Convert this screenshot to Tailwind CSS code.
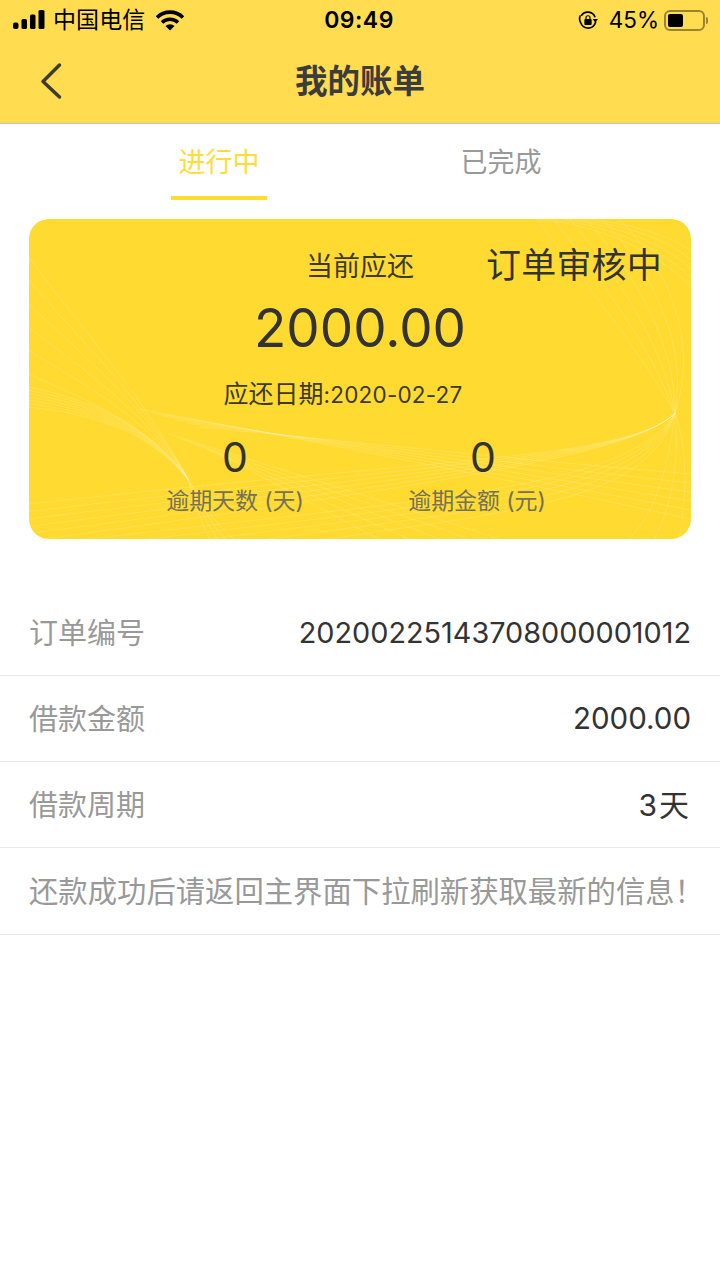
<!DOCTYPE html>
<html lang="zh-CN">
<head>
    <meta charset="UTF-8">
    <meta name="viewport" content="width=device-width, initial-scale=1.0">
    <title>我的账单</title>
    <script src="https://cdn.jsdelivr.net/npm/@tailwindcss/browser@4"></script>
</head>
<body class="bg-white text-[#333333] font-['Inter','Noto_Sans_CJK_SC',sans-serif]">
<div class="w-[720px] h-[1280px] overflow-hidden bg-white">

    <!-- 顶部黄色区域 -->
    <header class="h-[124px] bg-[#ffdc50] border-b border-[#c9c5ab]">
        <div class="h-[40px] flex items-center justify-between pl-[13px] pr-[12px] text-black">
            <div class="flex items-center w-[200px]">
                <svg width="32" height="20" viewBox="0 0 32 20" class="block">
                    <rect x="0" y="12.500" width="5.500" height="6.500" rx="2" fill="#000"/>
                    <rect x="8.500" y="9" width="5.500" height="10" rx="1.500" fill="#000"/>
                    <rect x="17" y="4.500" width="5.500" height="14.500" rx="1.500" fill="#000"/>
                    <rect x="25.500" y="0" width="6" height="19" rx="1.500" fill="#000"/>
                </svg>
                <span class="ml-[8px] text-[23px] leading-[30px] tracking-[0.1px] whitespace-nowrap">中国电信</span>
                <svg width="30" height="22" viewBox="0 0 30 22" class="ml-[10px] block">
                    <path d="M2 8.500a18.500 18.500 0 0 1 26 0" fill="none" stroke="#000" stroke-width="3.600"/>
                    <path d="M7 13.500a11.500 11.500 0 0 1 16 0" fill="none" stroke="#000" stroke-width="3.600"/>
                    <path d="M10.500 17a6.500 6.500 0 0 1 9 0L15 21.500z" fill="#000"/>
                </svg>
            </div>
            <div class="text-[23px] font-semibold tracking-[0.5px] leading-[30px] ml-[-3px]">09:49</div>
            <div class="flex items-center w-[200px] justify-end">
                <svg width="20" height="20" viewBox="0 0 22 22" class="block">
                    <path d="M18.800 8A8.500 8.500 0 0 0 3.500 6.500M2.500 6A8.800 8.800 0 0 0 3 14M3 14a8.500 8.500 0 0 0 15.500 1.500A8.500 8.500 0 0 0 19.500 12" fill="none" stroke="#000" stroke-width="1.800"/>
                    <path d="M16 10h6l-3 3.500z" fill="#000"/>
                    <rect x="7" y="10" width="8" height="6.500" rx="1" fill="#000"/>
                    <path d="M8.800 10V8.500a2.200 2.200 0 0 1 4.400 0V10" fill="none" stroke="#000" stroke-width="1.300"/>
                </svg>
                <span class="ml-[11px] text-[22.500px] leading-[30px]">45%</span>
                <div class="ml-[5px] flex items-center">
                    <div class="w-[41px] h-[21px] rounded-[6px] border-2 border-[#9a8434] p-[2px]">
                        <div class="w-[15px] h-full bg-black rounded-[2px]"></div>
                    </div>
                    <div class="ml-[1px] w-[2px] h-[7px] rounded-r-sm bg-[#9a8434]"></div>
                </div>
            </div>
        </div>
        <div class="relative h-[83px] flex items-center justify-center">
            <svg width="24" height="38" viewBox="0 0 24 38" class="absolute left-[39px] top-[22px]">
                <path d="M20.500 3L4 19.500 20.500 35" fill="none" stroke="#3c3c32" stroke-width="3.500" stroke-linecap="round" stroke-linejoin="round"/>
            </svg>
            <h1 class="text-[32.500px] leading-[40px] font-bold text-[#3c3c3c]">我的账单</h1>
        </div>
    </header>

    <!-- タブ -->
    <nav class="h-[76px] flex justify-center text-[27px] leading-[36px]">
        <div class="w-[282px] flex justify-center">
            <div class="w-[96px] h-[76px] pt-[21px] text-center text-[#ffdc3c] border-b-[4px] border-[#ffdc32]">进行中</div>
        </div>
        <div class="w-[282px] flex justify-center">
            <div class="w-[96px] h-[76px] pt-[21px] text-center text-[#999999] whitespace-nowrap">已完成</div>
        </div>
    </nav>

    <!-- 账单卡片 -->
    <section class="relative w-[662px] h-[320px] mt-[19px] ml-[29px] rounded-[20px] bg-[#ffda30] overflow-hidden">
        <svg id="waves" width="662" height="320" viewBox="0 0 662 320" class="absolute inset-0" fill="none" stroke="#fff" stroke-opacity="0.17" stroke-width="1"></svg>
        <div class="relative flex flex-col items-center">
            <div class="mt-[28px] text-[27px] leading-[40px] text-[#3c3a2a]">当前应还</div>
            <div class="absolute right-[29px] top-[22px] text-[35px] leading-[48px] tracking-[0.2px] text-[#333333] whitespace-nowrap">订单审核中</div>
            <div class="mt-[8px] text-[53px] leading-[66px] text-[#333333]">2000.00</div>
            <div class="mt-[17px] mr-[34px] leading-[32px] text-[#3c3a2a] whitespace-nowrap"><span class="text-[25px]">应还日期</span><span class="text-[22.500px] tracking-[0.2px]">:2020-02-27</span></div>
            <div class="w-full flex mt-[19px] pl-[138px]">
                <div class="w-[136px] flex flex-col items-center">
                    <div class="text-[41px] leading-[50px] text-[#333333]">0</div>
                    <div class="mt-[4px] text-[23px] leading-[30px] tracking-[-0.1px] text-[#757256] whitespace-nowrap">逾期天数 (天)</div>
                </div>
                <div class="w-[140px] ml-[104px] flex flex-col items-center">
                    <div class="ml-[12px] text-[41px] leading-[50px] text-[#333333]">0</div>
                    <div class="mt-[4px] text-[23px] leading-[30px] tracking-[-0.1px] text-[#757256] whitespace-nowrap">逾期金额 (元)</div>
                </div>
            </div>
        </div>
    </section>

    <!-- 订单信息 -->
    <section class="mt-[51px] text-[#999999] text-[29px]">
        <div class="h-[86px] flex items-center justify-between px-[29px] border-b border-[#e9e9e9]">
            <span class="pt-[2px]">订单编号</span>
            <span class="text-[#333333] text-[28.800px]">20200225143708000001012</span>
        </div>
        <div class="h-[86px] flex items-center justify-between px-[29px] border-b border-[#e9e9e9]">
            <span class="pt-[2px]">借款金额</span>
            <span class="text-[#333333] text-[29.500px]">2000.00</span>
        </div>
        <div class="h-[86px] flex items-center justify-between px-[29px] border-b border-[#e9e9e9]">
            <span class="pt-[2px]">借款周期</span>
            <span class="pt-[1px] text-[#333333] text-[30px] tracking-[2px]">3天</span>
        </div>
        <div class="h-[87px] flex items-center px-[29px] pt-[2px] border-b border-[#e9e9e9] whitespace-nowrap text-[29.350px]">还款成功后请返回主界面下拉刷新获取最新的信息！</div>
    </section>
</div>

<script>
    // 卡片底纹：在两条曲线之间插值出一组细线
    const waves = document.getElementById('waves');
    function fan(from, to, count) {
        for (let i = 0; i < count; i++) {
            const t = count > 1 ? i / (count - 1) : 0;
            const p = from.map((v, k) => (v + (to[k] - v) * t).toFixed(1));
            const path = document.createElementNS('http://www.w3.org/2000/svg', 'path');
            path.setAttribute('d', `M${p[0]} ${p[1]}C${p[2]} ${p[3]} ${p[4]} ${p[5]} ${p[6]} ${p[7]}`);
            waves.appendChild(path);
        }
    }
    // 左侧汇聚到下方
    fan([0, 188, 90, 198, 130, 225, 160, 262], [0, 168, 80, 185, 125, 215, 158, 258], 7);
    fan([0, 155, 50, 178, 120, 205, 158, 258], [0, 38, 40, 95, 110, 170, 158, 258], 6);
    fan([158, 258, 165, 280, 172, 305, 181, 320], [158, 258, 170, 280, 190, 310, 205, 320], 4);
    // 右侧波浪，向左延伸到底边
    fan([646, 194, 600, 240, 420, 238, 0, 285], [646, 194, 610, 232, 440, 262, 0, 322], 6);
    fan([646, 194, 600, 270, 400, 280, 60, 320], [646, 194, 620, 280, 500, 290, 300, 320], 5);
    // 右上方
    fan([508, 0, 560, 70, 610, 130, 646, 194], [590, 0, 640, 50, 670, 120, 646, 194], 6);
    fan([508, 0, 560, 5, 620, 25, 662, 68], [560, 0, 600, 5, 640, 15, 662, 32], 5);
    fan([646, 194, 640, 240, 630, 290, 600, 320], [646, 194, 662, 240, 655, 290, 650, 320], 3);
    // 下方网格
    fan([110, 190, 300, 225, 500, 265, 662, 300], [170, 208, 320, 222, 480, 240, 662, 255], 6);
    fan([140, 215, 250, 250, 380, 290, 470, 320], [190, 235, 240, 260, 300, 295, 350, 320], 5);
</script>
</body>
</html>
